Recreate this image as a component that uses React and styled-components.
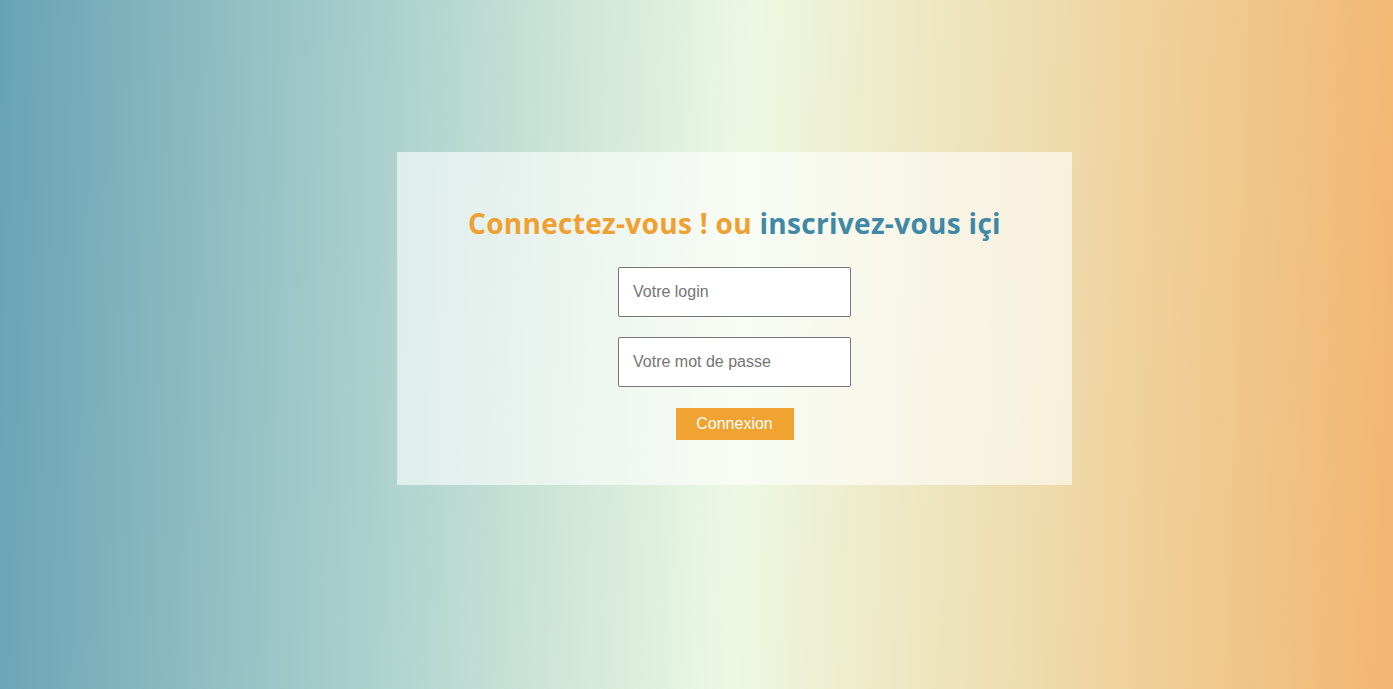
import React, { useState } from "react";
import styled, { createGlobalStyle } from "styled-components";

const GlobalStyle = createGlobalStyle`
  html, body {
    margin: 0;
    height: 100%;
  }
  body {
    font-family: "Liberation Sans", Arial, sans-serif;
  }
`;

const Page = styled.div`
  min-height: 100vh;
  box-sizing: border-box;
  padding-top: 152px;
  background: linear-gradient(92deg, #68a3b5 0%, #b2d5cf 30%, #edf8e3 53%, #eedfb2 72%, #f2b670 100%);
`;

const Card = styled.form`
  width: 675px;
  margin-left: 397px;
  box-sizing: border-box;
  padding: 53px 0 45px;
  background: rgba(255, 255, 255, 0.6);
  display: flex;
  flex-direction: column;
  align-items: center;
`;

const Title = styled.h1`
  margin: 0 0 26px;
  font-family: "Open Sans", "Noto Sans", sans-serif;
  font-weight: 700;
  font-size: 28px;
  line-height: 36px;
  letter-spacing: 0.3px;
  color: #f0a030;
`;

const Link = styled.a`
  color: #3f88a6;
  text-decoration: none;
`;

const Field = styled.input`
  width: 233px;
  height: 50px;
  box-sizing: border-box;
  margin-bottom: 20px;
  padding: 0 14px;
  border: 1px solid #767676;
  border-radius: 2px;
  background: #fff;
  font-family: "Liberation Sans", Arial, sans-serif;
  font-size: 16px;
  color: #333;
  outline: none;

  &::placeholder {
    color: #757575;
  }
`;

const Button = styled.button`
  margin-top: 1px;
  width: 118px;
  height: 32px;
  border: none;
  background: #f0a330;
  color: #fff;
  font-family: "Liberation Sans", Arial, sans-serif;
  font-size: 16px;
  cursor: pointer;
`;

export default function App() {
  const [login, setLogin] = useState("");
  const [password, setPassword] = useState("");

  return (
    <Page>
      <GlobalStyle />
      <Card onSubmit={e => e.preventDefault()}>
        <Title>
          Connectez-vous ! ou <Link href="#">inscrivez-vous içi</Link>
        </Title>
        <Field
          type="text"
          placeholder="Votre login"
          value={login}
          onChange={e => setLogin(e.target.value)}
        />
        <Field
          type="password"
          placeholder="Votre mot de passe"
          value={password}
          onChange={e => setPassword(e.target.value)}
        />
        <Button type="submit">Connexion</Button>
      </Card>
    </Page>
  );
}
